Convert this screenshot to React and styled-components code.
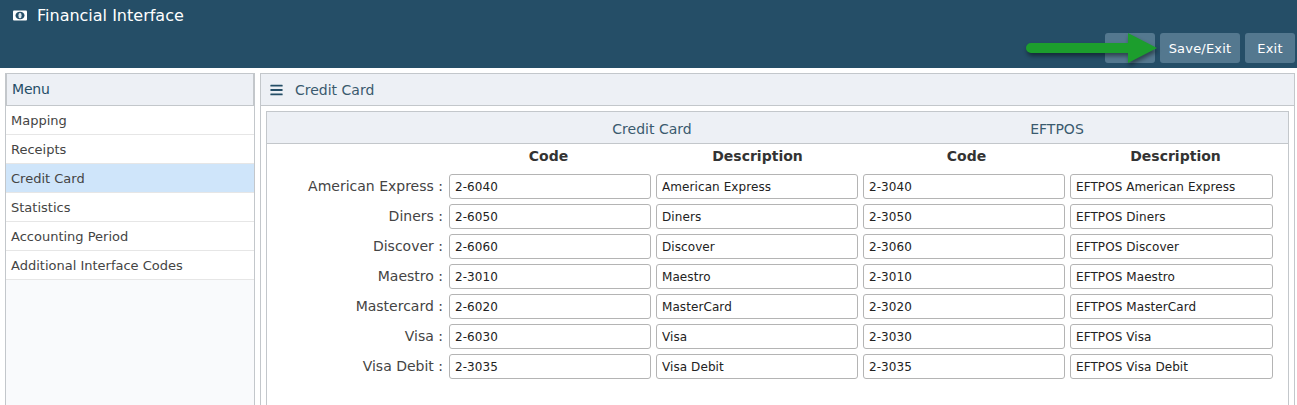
import React from 'react';
import styled, { createGlobalStyle } from 'styled-components';
import { FaBars } from 'react-icons/fa';

const GlobalStyle = createGlobalStyle`
  html, body {
    margin: 0;
    padding: 0;
    height: 100%;
    overflow: hidden;
    background: #fff;
    font-family: "DejaVu Sans", Verdana, sans-serif;
    font-size: 13px;
    color: #333;
  }
`;

const Page = styled.div`
  width: 1297px;
  height: 405px;
  overflow: hidden;
  display: flex;
  flex-direction: column;
`;

const TopBar = styled.header`
  position: relative;
  height: 68px;
  flex: none;
  background: #254e67;
  color: #fff;
  padding: 0 2px 5px 13px;
  box-sizing: border-box;
  display: flex;
  flex-direction: column;
  justify-content: space-between;
`;

const AppTitle = styled.div`
  display: flex;
  align-items: center;
  gap: 10px;
  height: 31px;
  font-size: 16px;
`;

const Actions = styled.div`
  display: flex;
  justify-content: flex-end;
  gap: 5px;
`;

const ActionButton = styled.button`
  width: ${(p) => p.$w}px;
  height: 30px;
  border: 0;
  border-radius: 3px;
  padding: 0;
  background: #54788f;
  color: #fff;
  font: inherit;
  font-size: 13px;
  letter-spacing: 0.2px;
`;

const Arrow = styled.svg`
  position: absolute;
  left: 1020px;
  top: 28px;
  filter: drop-shadow(1px 3px 2px rgba(0, 0, 0, 0.45));
`;

const Body = styled.div`
  flex: 1;
  display: flex;
  gap: 5px;
  padding: 5px 2px 0 5px;
  min-height: 0;
`;

const Sidebar = styled.aside`
  width: 250px;
  flex: none;
  box-sizing: border-box;
  border: 1px solid #c3c7cb;
  border-bottom: 0;
  background: #f9fafc;
  margin-bottom: -10px;
`;

const SidebarTitle = styled.div`
  height: 32px;
  box-sizing: border-box;
  border: 1px solid #c3c7cb;
  border-top: 0;
  background: #edf0f5;
  color: #254e67;
  font-size: 14px;
  letter-spacing: -0.2px;
  line-height: 31px;
  padding-left: 5px;
`;

const MenuItem = styled.div`
  height: 29px;
  box-sizing: border-box;
  border-bottom: 1px solid #e6e6e6;
  background: ${(p) => (p.$active ? '#cfe5fa' : '#fff')};
  color: #444;
  line-height: 30px;
  padding-left: 5px;
`;

const Main = styled.main`
  flex: 1;
  border: 1px solid #c3c7cb;
  border-bottom: 0;
  background: #fff;
  margin-bottom: -10px;
  min-width: 0;
`;

const MainHead = styled.div`
  height: 32px;
  box-sizing: border-box;
  border-bottom: 1px solid #c3c7cb;
  background: #edf0f5;
  color: #3a5a6e;
  font-size: 14px;
  display: flex;
  align-items: center;
  gap: 12px;
  padding-left: 9px;
  svg {
    width: 13px;
    height: 14px;
    color: #254e67;
  }
`;

const Panel = styled.section`
  margin: 5px 5px 0;
  border: 1px solid #c3c7cb;
  border-bottom: 0;
  height: 320px;
`;

const GroupHead = styled.div`
  height: 32px;
  box-sizing: border-box;
  border-bottom: 1px solid #c3c7cb;
  background: #edf0f5;
  color: #3a5a6e;
  font-size: 14px;
  line-height: 34px;
  display: grid;
  grid-template-columns: 182px 406px 404px;
  text-align: center;
`;

const ColHeads = styled.div`
  display: grid;
  grid-template-columns: repeat(4, 209px);
  padding-left: 177px;
  height: 25px;
  margin-bottom: 5px;
`;

const ColHead = styled.div`
  font-weight: 700;
  font-size: 14px;
  line-height: 25px;
  text-align: center;
  color: #333;
`;

const FormGrid = styled.div`
  display: grid;
  grid-template-columns: 177px 202px 202px 202px 203px;
  column-gap: 5px;
  row-gap: 5px;
  align-items: center;
`;

const RowLabel = styled.label`
  text-align: right;
  font-size: 14px;
  color: #444;
  padding: 0 1px 2px 0;
`;

const Field = styled.input`
  height: 25px;
  width: 100%;
  box-sizing: border-box;
  border: 1px solid #b4b4b4;
  border-radius: 3px;
  padding: 0 5px;
  font: inherit;
  font-size: 12px;
  letter-spacing: 0.08px;
  color: #222;
  background: #fff;
`;

const BillIcon = () => (
  <svg width="14" height="11" viewBox="0 0 14 11">
    <rect width="14" height="10" y="0.5" rx="1" fill="#fff" />
    <ellipse cx="7" cy="5.5" rx="4.5" ry="3.8" fill="#254e67" />
    <ellipse cx="7" cy="5.5" rx="1.6" ry="2.8" fill="#dfe8ee" />
  </svg>
);

const menu = ['Mapping', 'Receipts', 'Credit Card', 'Statistics', 'Accounting Period', 'Additional Interface Codes'];

const cards = [
  ['American Express', '2-6040', 'American Express', '2-3040', 'EFTPOS American Express'],
  ['Diners', '2-6050', 'Diners', '2-3050', 'EFTPOS Diners'],
  ['Discover', '2-6060', 'Discover', '2-3060', 'EFTPOS Discover'],
  ['Maestro', '2-3010', 'Maestro', '2-3010', 'EFTPOS Maestro'],
  ['Mastercard', '2-6020', 'MasterCard', '2-3020', 'EFTPOS MasterCard'],
  ['Visa', '2-6030', 'Visa', '2-3030', 'EFTPOS Visa'],
  ['Visa Debit', '2-3035', 'Visa Debit', '2-3035', 'EFTPOS Visa Debit'],
];

export default function App() {
  return (
    <Page>
      <GlobalStyle />
      <TopBar>
        <AppTitle>
          <BillIcon />
          Financial Interface
        </AppTitle>
        <Actions>
          <ActionButton $w={50} />
          <ActionButton $w={80}>Save/Exit</ActionButton>
          <ActionButton $w={50}>Exit</ActionButton>
        </Actions>
        <Arrow width="140" height="42" viewBox="0 0 140 42">
          <path d="M11 15h97V5l29 15-29 15V25H11a5 5 0 0 1 0-10z" fill="#1c9e2d" />
        </Arrow>
      </TopBar>
      <Body>
        <Sidebar>
          <SidebarTitle>Menu</SidebarTitle>
          {menu.map((m) => (
            <MenuItem key={m} $active={m === 'Credit Card'}>{m}</MenuItem>
          ))}
        </Sidebar>
        <Main>
          <MainHead>
            <FaBars />
            Credit Card
          </MainHead>
          <Panel>
            <GroupHead>
              <span />
              <span>Credit Card</span>
              <span>EFTPOS</span>
            </GroupHead>
            <ColHeads>
              <ColHead>Code</ColHead>
              <ColHead>Description</ColHead>
              <ColHead>Code</ColHead>
              <ColHead>Description</ColHead>
            </ColHeads>
            <FormGrid>
              {cards.map(([name, a, b, c, d]) => (
                <React.Fragment key={name}>
                  <RowLabel>{name} :</RowLabel>
                  <Field defaultValue={a} />
                  <Field defaultValue={b} />
                  <Field defaultValue={c} />
                  <Field defaultValue={d} />
                </React.Fragment>
              ))}
            </FormGrid>
          </Panel>
        </Main>
      </Body>
    </Page>
  );
}
